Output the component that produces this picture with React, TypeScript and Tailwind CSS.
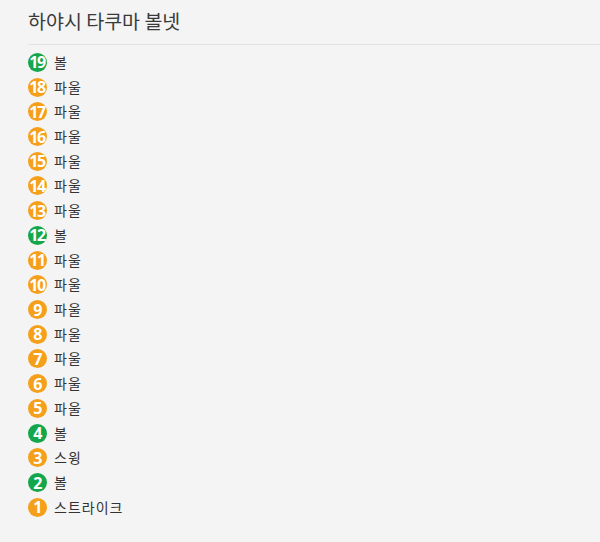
const pitches: { n: number; result: string; ball?: boolean }[] = [
  { n: 19, result: "볼", ball: true },
  { n: 18, result: "파울" },
  { n: 17, result: "파울" },
  { n: 16, result: "파울" },
  { n: 15, result: "파울" },
  { n: 14, result: "파울" },
  { n: 13, result: "파울" },
  { n: 12, result: "볼", ball: true },
  { n: 11, result: "파울" },
  { n: 10, result: "파울" },
  { n: 9, result: "파울" },
  { n: 8, result: "파울" },
  { n: 7, result: "파울" },
  { n: 6, result: "파울" },
  { n: 5, result: "파울" },
  { n: 4, result: "볼", ball: true },
  { n: 3, result: "스윙" },
  { n: 2, result: "볼", ball: true },
  { n: 1, result: "스트라이크" },
]

export default function App() {
  return (
    <main
      className="min-h-screen w-[600px] bg-[#f4f4f4] pl-[28px]"
      style={{ fontFamily: '"Noto Sans CJK KR", "Noto Sans", sans-serif' }}
    >
      <h1 className="pt-[5px] h-[45px] text-[19.5px] leading-[32px] text-[#3a3a3a] border-b border-[#e2e2e2]">
        하야시 타쿠마 볼넷
      </h1>

      <ul className="pt-[5px]">
        {pitches.map((p) => (
          <li key={p.n} className="flex items-center h-[24.72px] gap-[7px]">
            <span
              className={
                "flex items-center justify-center w-[19px] h-[19px] rounded-full text-white font-bold text-[16px] tracking-[-1.5px] leading-none " +
                (p.ball ? "bg-[#14a64a]" : "bg-[#f5a01a]")
              }
              style={{ fontFamily: '"Open Sans", "Noto Sans", sans-serif' }}
            >
              <span className="-ml-[1px]">{p.n}</span>
            </span>
            <span className="text-[14px] tracking-[1px] text-[#333]">{p.result}</span>
          </li>
        ))}
      </ul>
    </main>
  )
}
